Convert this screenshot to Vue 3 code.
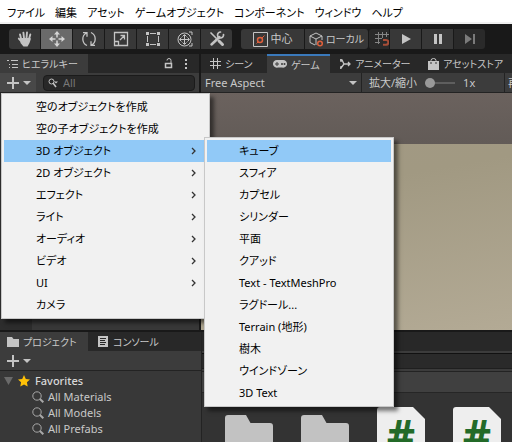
<script setup>
const menus = ['ファイル', '編集', 'アセット', 'ゲームオブジェクト', 'コンポーネント', 'ウィンドウ', 'ヘルプ']
const tools = ['hand', 'move', 'rotate', 'scale', 'rect', 'transform', 'custom']
const createItems = [
  { label: '空のオブジェクトを作成' },
  { label: '空の子オブジェクトを作成' },
  { label: '3D オブジェクト', sub: true, active: true },
  { label: '2D オブジェクト', sub: true },
  { label: 'エフェクト', sub: true },
  { label: 'ライト', sub: true },
  { label: 'オーディオ', sub: true },
  { label: 'ビデオ', sub: true },
  { label: 'UI', sub: true },
  { label: 'カメラ' }
]
const objectItems = [
  'キューブ', 'スフィア', 'カプセル', 'シリンダー', '平面', 'クアッド',
  'Text - TextMeshPro', 'ラグドール...', 'Terrain (地形)', '樹木', 'ウインドゾーン', '3D Text'
]
const favorites = ['All Materials', 'All Models', 'All Prefabs']
const assets = ['folder', 'folder', 'script', 'script']
</script>

<template>
  <div class="editor">
    <nav class="menubar">
      <button v-for="m in menus" :key="m">{{ m }}</button>
    </nav>

    <header class="toolbar">
      <div class="group tools">
        <button v-for="t in tools" :key="t" :class="{ on: t === 'move' }" :aria-label="t">
          <svg v-if="t === 'hand'" width="16" height="16" viewBox="0 0 16 16">
            <path d="M4.200 8 3 3.400M7 7 6.400 1.700M9.500 7 10 1.500M12 8l1.300-4.600M5 11 1.800 7.600" stroke="#c4c4c4" stroke-width="1.900" stroke-linecap="round" fill="none" />
            <path d="M3.500 7 12.700 7 14 7.500 12.500 12 10.500 15.500H6.500L3.500 12Z" fill="#c4c4c4" />
          </svg>
          <svg v-else-if="t === 'move'" width="16" height="16" viewBox="0 0 16 16">
            <path d="M8 0 11 3.500H5ZM8 16 5 12.500h6ZM0 8 3.500 5v6ZM16 8l-3.500 3V5Z" fill="#d6d6d6" />
            <path d="M8 3v3.500M8 9.500V13M3 8h3.500M9.500 8H13" stroke="#d6d6d6" stroke-width="1.500" />
          </svg>
          <svg v-else-if="t === 'rotate'" width="16" height="16" viewBox="0 0 16 16" fill="none" stroke="#c4c4c4" stroke-width="1.300">
            <path d="M6 14.500C.5 12 .5 4.500 5.500 2M2 1.700h4v4M10 1.500c5.500 2.500 5.500 10 .5 12.500M14 14.300h-4v-4" />
          </svg>
          <svg v-else-if="t === 'scale'" width="16" height="16" viewBox="0 0 16 16" fill="none" stroke="#c4c4c4" stroke-width="1.300">
            <path d="M1.500 1.500h13v13h-13ZM1.500 10.500h4v4M7 9l4.500-4.500M7.500 4.500h4v4" />
          </svg>
          <svg v-else-if="t === 'rect'" width="16" height="16" viewBox="0 0 16 16">
            <path d="M1 1h3v3H1ZM12 1h3v3h-3ZM1 12h3v3H1ZM12 12h3v3h-3Z" fill="#c4c4c4" />
            <path d="M5 2.500h6M5 13.500h6M2.500 5v6M13.500 5v6" stroke="#c4c4c4" />
          </svg>
          <svg v-else-if="t === 'transform'" width="16" height="16" viewBox="0 0 16 16" fill="none" stroke="#c4c4c4">
            <circle cx="7.500" cy="8.500" r="6.500" />
            <path d="M7.500 4v9M3 8.500h9M5.500 5.500l2-2 2 2M5.500 11.500l2 2 2-2M4.500 6.500l-2 2 2 2M10.500 6.500l2 2-2 2M12 1h3v3M15 12v3h-3" />
          </svg>
          <svg v-else width="16" height="16" viewBox="0 0 16 16" fill="none" stroke="#c4c4c4" stroke-linecap="round">
            <path d="M2.500 13.500 10.500 6" stroke-width="2.500" />
            <path d="M14.500 3.500a3 3 0 1 1-3-2.500M2 2l5 5" stroke-width="1.700" />
            <path d="M10 10l3.500 3.500" stroke-width="3" />
          </svg>
        </button>
      </div>
      <div class="group pivots">
        <button>
          <svg width="15" height="15" viewBox="0 0 15 15" fill="none">
            <path d="M.5.5h14v14H.5Z" stroke="#c4c4c4" />
            <circle cx="7" cy="8" r="2.500" stroke="#e0603c" stroke-width="1.500" />
            <path d="m9 6 2.500-2.500M5 10l-1.500 1.500" stroke="#e0603c" />
          </svg>
          <span>中心</span>
        </button>
        <button class="kana">
          <svg width="15" height="15" viewBox="0 0 15 15" fill="none" stroke="#c4c4c4">
            <path d="M6 13 1 10.500V4l6-3 6 3v4M1 4l6 3 6-3M7 7v6" />
            <circle cx="11" cy="11.500" r="2.300" stroke="#e0603c" stroke-width="1.500" />
          </svg>
          <span>ローカル</span>
        </button>
      </div>
      <div class="group play">
        <button class="dim" aria-label="Snap">
          <svg width="14" height="16" viewBox="0 0 14 16" fill="none" stroke="#858585">
            <path d="M3.500 1v12M7.500 1v6M11.500 1v5M0 3.500h14M0 7.500h7M0 11.500h5" />
            <path d="M8 9h3a2.300 2.300 0 0 1 0 4.700H8" stroke="#a84e38" stroke-width="2" />
          </svg>
        </button>
        <button aria-label="Play"><svg width="12" height="12" viewBox="0 0 12 12"><path d="M2 1v10l9-5Z" fill="#c4c4c4" /></svg></button>
        <button aria-label="Pause"><svg width="12" height="12" viewBox="0 0 12 12"><path d="M2 1h3v10H2ZM7 1h3v10H7Z" fill="#c4c4c4" /></svg></button>
        <button class="dim" aria-label="Step"><svg width="12" height="12" viewBox="0 0 12 12"><path d="M1 1v10l7-5ZM9 1h2v10H9Z" fill="#7b7b7b" /></svg></button>
      </div>
    </header>

    <div class="upper">
      <section class="hierarchy">
        <div class="tabs">
          <button class="tab current">
            <svg width="11" height="10" viewBox="0 0 11 10" stroke="#c4c4c4"><path d="M0 1.500h2M4 1.500h7M2 5.500h1M5 5.500h6M2 8.500h1M5 8.500h6" /></svg>
            <span>ヒエラルキー</span>
          </button>
          <div class="tab-actions">
            <svg width="9" height="11" viewBox="0 0 9 11" fill="none" stroke="#c4c4c4"><path d="M1.500 5.500h6v4h-6Z" stroke-width="1.500" /><path d="M7 5V2.500a2 2 0 0 0-4 0" /></svg>
            <svg width="4" height="11" viewBox="0 0 4 11" fill="#c4c4c4"><path d="M1 1h2v2H1ZM1 5h2v2H1ZM1 9h2v2H1Z" /></svg>
          </div>
        </div>
        <div class="bar">
          <button class="add" aria-label="作成">
            <svg width="24" height="12" viewBox="0 0 24 12"><path d="M6 0v12M0 6h12" stroke="#c4c4c4" stroke-width="2" /><path d="M16 4h8l-4 4Z" fill="#c4c4c4" /></svg>
          </button>
          <label class="search">
            <svg width="10" height="10" viewBox="0 0 10 10" fill="none" stroke="#c4c4c4"><circle cx="3.500" cy="3.500" r="2.500" /><path d="m5 5 3 4" stroke-width="1.500" /><path d="M6 3.500h4l-2 2Z" fill="#c4c4c4" stroke="none" /></svg>
            <input type="text" placeholder="All" aria-label="検索" />
          </label>
        </div>
        <div class="tree"></div>
        <ul class="popup create">
          <li v-for="i in createItems" :key="i.label">
            <button :class="{ active: i.active }">
              <span>{{ i.label }}</span>
              <svg v-if="i.sub" width="5" height="8" viewBox="0 0 5 8" fill="none" stroke="#333" stroke-width="1.300"><path d="m1 1 3 3-3 3" /></svg>
            </button>
          </li>
        </ul>
        <ul class="popup objects">
          <li v-for="(o, n) in objectItems" :key="o">
            <button :class="{ active: n === 0 }"><span>{{ o }}</span></button>
          </li>
        </ul>
      </section>

      <section class="game">
        <div class="tabs">
          <button class="tab scene">
            <svg width="11" height="11" viewBox="0 0 11 11" stroke="#c4c4c4"><path d="M3.500 0v11M7.500 0v11M0 3.500h11M0 7.500h11" /></svg>
            <span>シーン</span>
          </button>
          <button class="tab current focus">
            <svg width="14" height="9" viewBox="0 0 14 9"><path d="M4 0h6a4 4 0 0 1 4 4.500A4 4 0 0 1 9 7.500H5a4 4 0 0 1-5-3A4 4 0 0 1 4 0Z" fill="#c4c4c4" /><path d="M4 2v4M2 4h4" stroke="#3c3c3c" /><circle cx="9" cy="4" r="1" fill="#3c3c3c" /><circle cx="11.500" cy="4" r="1" fill="#3c3c3c" /></svg>
            <span>ゲーム</span>
          </button>
          <button class="tab animator">
            <svg width="11" height="10" viewBox="0 0 11 10" fill="none" stroke="#c4c4c4" stroke-width="1.300"><path d="M0 1h2l2 4h6M0 9h1l3-4M8 3l2 2-2 2M1 0v3M1 7v3" /></svg>
            <span>アニメーター</span>
          </button>
          <button class="tab store">
            <svg width="11" height="12" viewBox="0 0 11 12"><path d="M0 3h11v9H0Z" fill="#c4c4c4" /><path d="M3 5V2.500a2.500 2 0 0 1 5 0V5" fill="none" stroke="#c4c4c4" /><path d="M3 4v2M8 4v2" stroke="#333" /></svg>
            <span>アセットストア</span>
          </button>
        </div>
        <div class="bar">
          <button class="aspect"><span>Free Aspect</span><svg width="8" height="4" viewBox="0 0 8 4"><path d="M0 0h8L4 4Z" fill="#c4c4c4" /></svg></button>
          <label class="zoom"><span>拡大/縮小</span><input type="range" min="1" max="5" value="1" /><span>1x</span></label>
          <button class="maximize">再</button>
        </div>
        <div class="view"><div class="sky"></div></div>
      </section>
    </div>

    <div class="lower">
      <section class="project">
        <div class="tabs">
          <button class="tab current">
            <svg width="12" height="10" viewBox="0 0 12 10"><path d="M0 0h5l1.500 2H12v8H0Z" fill="#c4c4c4" /></svg>
            <span>プロジェクト</span>
          </button>
          <button class="tab console">
            <svg width="10" height="11" viewBox="0 0 10 11"><path d="M0 0h10v11H0Z" fill="#c4c4c4" /><path d="M2 2.500h6M2 4.500h5M2 6.500h6M2 8.500h5" stroke="#282828" /></svg>
            <span>コンソール</span>
          </button>
        </div>
        <div class="bar">
          <button class="add flat" aria-label="作成">
            <svg width="24" height="12" viewBox="0 0 24 12"><path d="M6 0v12M0 6h12" stroke="#c4c4c4" stroke-width="2" /><path d="M16 4h8l-4 4Z" fill="#c4c4c4" /></svg>
          </button>
        </div>
        <div class="favorites">
          <h2>
            <svg width="9" height="8" viewBox="0 0 9 8"><path d="M0 0h9L4.500 8Z" fill="#6a6a6a" /></svg>
            <svg width="12" height="12" viewBox="0 0 12 12"><path d="m6 0 1.800 3.900 4.200.5-3.100 2.900.8 4.300L6 9.500l-3.700 2.100.8-4.300L0 4.400l4.200-.5Z" fill="#ffc107" /></svg>
            <span>Favorites</span>
          </h2>
          <ul>
            <li v-for="f in favorites" :key="f">
              <svg width="12" height="12" viewBox="0 0 12 12" fill="none" stroke="#a8a8a8"><circle cx="5" cy="5" r="4.200" /><path d="m8 8 3.300 3.300" stroke-width="2" /></svg>
              <span>{{ f }}</span>
            </li>
          </ul>
        </div>
      </section>
      <section class="browser">
        <div class="tabs"></div>
        <div class="find"><div class="field"></div></div>
        <div class="crumbs"></div>
        <div class="assets">
          <div v-for="(a, n) in assets" :key="n" class="asset" :class="a">
            <svg v-if="a === 'folder'" width="48" height="40" viewBox="0 0 48 40"><path d="M3 0h18l4.500 8H45a3 3 0 0 1 3 3v29H0V3a3 3 0 0 1 3-3Z" fill="#c2c2c2" /></svg>
            <template v-else>
              <svg width="48" height="60" viewBox="0 0 48 60"><path d="M3 0h33l12 12v48H0V3a3 3 0 0 1 3-3Z" fill="#eee" /></svg>
              <span>#</span>
            </template>
          </div>
        </div>
      </section>
    </div>
  </div>
</template>

<style>
body { margin: 0; background: #191919; }
</style>

<style scoped>
.editor {
  display: flex;
  flex-direction: column;
  height: 100vh;
  overflow: hidden;
  color: #c8c8c8;
  font: 11px/16px "Noto Sans", "Noto Sans CJK JP", sans-serif;
  font-feature-settings: "palt";
  white-space: nowrap;
}
button {
  display: flex;
  flex: none;
  align-items: center;
  margin: 0;
  padding: 0;
  border: 0;
  background: none;
  color: inherit;
  font: inherit;
  font-feature-settings: inherit;
  white-space: nowrap;
}
svg { display: block; flex: none; }
ul { margin: 0; padding: 0; list-style: none; }

.menubar {
  display: flex;
  flex: none;
  gap: 10px;
  box-sizing: border-box;
  height: 24px;
  padding: 3px 7px 0;
  background: #fff;
  border-bottom: 2px solid #f0f0f0;
  color: #000;
}

.toolbar {
  display: flex;
  flex: none;
  align-items: center;
  height: 30px;
  padding-left: 9px;
  background: #191919;
}
.group { display: flex; gap: 1px; }
.group button {
  justify-content: center;
  height: 20px;
  background: #383838;
}
.group button:first-child { border-radius: 3px 0 0 3px; }
.group button:last-child { border-radius: 0 3px 3px 0; }
.tools button { width: 31px; }
.tools button.on { background: #6a6a6a; }
.pivots { margin-left: 9px; }
.pivots button { gap: 3px; width: 63px; }
.pivots .kana { gap: 2px; font-size: 10px; }
.play { margin-left: 1px; }
.play button { width: 31px; }
.play button.dim { background: #2a2a2a; }
.play button:first-child { justify-content: flex-end; width: 20px; }

.upper { display: flex; flex: none; height: 276px; gap: 2px; }
.hierarchy { position: relative; z-index: 1; display: flex; flex: none; flex-direction: column; width: 199px; }
.game { display: flex; flex: 1; flex-direction: column; min-width: 0; overflow: hidden; }

.tabs { display: flex; flex: none; height: 19px; background: #282828; }
.tab { gap: 4px; box-sizing: border-box; height: 19px; padding: 0 7px; font-size: 10px; }
.tab.current { background: #3c3c3c; }
.hierarchy .tab.current, .project .tab.current { width: 88px; }
.tab.scene { width: 66px; padding: 0 9px; }
.tab.focus { width: 63px; padding: 0 6px; border-top: 2px solid #3a79bb; }
.tab.animator { width: 88px; padding: 0 10px; }
.tab.console { padding: 0 10px; gap: 5px; }
.tab.store { padding: 0 2px 0 10px; }
.tab-actions { display: flex; align-items: center; gap: 11px; margin-left: auto; padding-right: 11px; }

.bar { display: flex; flex: none; align-items: center; box-sizing: border-box; height: 20px; background: #3c3c3c; border-bottom: 1px solid #232323; }
.add { justify-content: center; width: 36px; height: 19px; padding-left: 1px; background: #484848; }
.add.flat { background: none; }
.search {
  display: flex;
  flex: 1;
  align-items: center;
  gap: 5px;
  box-sizing: border-box;
  min-width: 0;
  height: 16px;
  margin: 0 4px 0 7px;
  padding: 0 4px;
  background: #282828;
  border: 1px solid #1b1b1b;
  border-radius: 4px;
}
input { min-width: 0; margin: 0; padding: 0; border: 0; background: none; color: #c8c8c8; font: inherit; }
.search input { flex: 1; height: 14px; }
.search input::placeholder { color: #777; opacity: 1; }
.tree { flex: 1; background: linear-gradient(to right, #2d2d2d 32px, #383838 32px); }

.aspect { justify-content: space-between; box-sizing: border-box; width: 161px; height: 19px; padding: 0 4px; border-right: 1px solid #232323; }
.zoom { display: flex; flex: none; align-items: center; box-sizing: border-box; width: 143px; height: 19px; padding-left: 7px; gap: 8px; border-right: 1px solid #232323; }
.zoom input { width: 30px; height: 12px; appearance: none; }
.zoom input::-webkit-slider-runnable-track { height: 2px; background: #5e5e5e; }
.zoom input::-webkit-slider-thumb { appearance: none; width: 10px; height: 10px; margin-top: -4px; border-radius: 50%; background: #999; }
.maximize { padding-left: 3px; }
.view { flex: 1; background: linear-gradient(170deg, #a29985, #a19982 40%, #b3aa95); }
.sky { height: 51px; background: linear-gradient(#6b625e, #625b57); }

.popup {
  position: absolute;
  box-sizing: border-box;
  padding: 2px;
  background: #f1f1f1;
  border: 1px solid #c8c8c8;
  box-shadow: 4px 4px 4px rgba(0, 0, 0, 0.5);
  color: #000;
}
.create { top: 39px; left: 1px; width: 209px; }
.objects { top: 83px; left: 204px; width: 190px; }
.popup button { justify-content: space-between; width: 100%; height: 22px; padding: 0 11px 0 32px; }
.popup button.active { background: #91c9f7; }

.lower { display: flex; flex: 1; min-height: 0; margin-top: 2px; }
.project { display: flex; flex: none; flex-direction: column; box-sizing: border-box; width: 202px; background: #383838; border-right: 1px solid #232323; }
.favorites h2 { display: flex; align-items: center; gap: 5px; height: 16px; margin: 2px 0 0; padding-left: 4px; font-size: 11px; font-weight: 500; color: #d8d8d8; }
.favorites li { display: flex; align-items: center; gap: 4px; height: 16px; padding-left: 32px; }
.browser { display: flex; flex: 1; flex-direction: column; min-width: 0; background: #333; }
.find { flex: none; box-sizing: border-box; height: 21px; padding: 2px 0; background: #3c3c3c; border-bottom: 1px solid #232323; }
.field { box-sizing: border-box; height: 16px; background: #2a2a2a; border-top: 1px solid #111; border-bottom: 1px solid #1f1f1f; }
.crumbs { flex: none; height: 20px; background: #404040; border-bottom: 1px solid #262626; }
.assets { display: flex; gap: 28px; padding: 14px 23px 0; }
.asset { position: relative; flex: none; width: 48px; }
.asset.folder { padding-top: 8px; }
.asset span {
  position: absolute;
  top: 4px;
  left: 0;
  width: 48px;
  color: #236a28;
  font-size: 44px;
  font-weight: 700;
  line-height: 48px;
  text-align: center;
}
</style>
